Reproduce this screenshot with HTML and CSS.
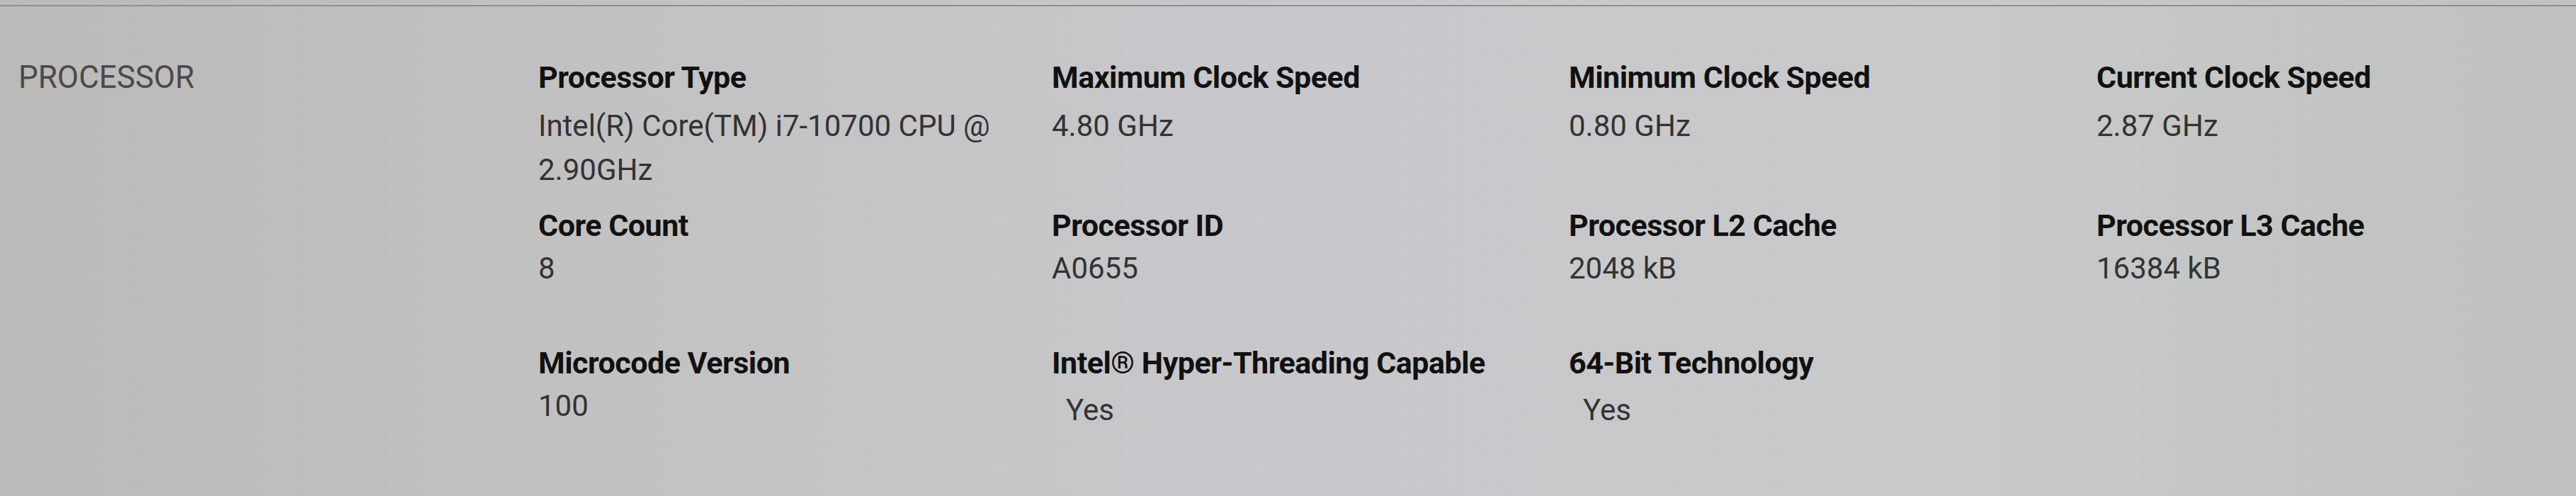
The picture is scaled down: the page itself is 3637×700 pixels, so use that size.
FILE: index.html
```html
<!DOCTYPE html>
<html lang="en">
<head>
  <meta charset="UTF-8" />
  <meta name="viewport" content="width=device-width, initial-scale=1.0"/>
  <title>Processor</title>
  <link rel="stylesheet" href="styles.css">
</head>
<body>

<section class="spec-section">
  <h2 class="section-title">PROCESSOR</h2>

  <div class="spec-grid">
    <div class="spec top">
      <h4>Processor Type</h4>
      <p>Intel(R) Core(TM) i7-10700 CPU @ 2.90GHz</p>
    </div>
    <div class="spec top">
      <h4>Maximum Clock Speed</h4>
      <p>4.80 GHz</p>
    </div>
    <div class="spec top">
      <h4>Minimum Clock Speed</h4>
      <p>0.80 GHz</p>
    </div>
    <div class="spec top">
      <h4>Current Clock Speed</h4>
      <p>2.87 GHz</p>
    </div>

    <div class="spec">
      <h4>Core Count</h4>
      <p>8</p>
    </div>
    <div class="spec">
      <h4>Processor ID</h4>
      <p>A0655</p>
    </div>
    <div class="spec">
      <h4>Processor L2 Cache</h4>
      <p>2048 kB</p>
    </div>
    <div class="spec">
      <h4>Processor L3 Cache</h4>
      <p>16384 kB</p>
    </div>

    <div class="spec">
      <h4>Microcode Version</h4>
      <p>100</p>
    </div>
    <div class="spec">
      <h4>Intel® Hyper-Threading Capable</h4>
      <p class="flag">Yes</p>
    </div>
    <div class="spec">
      <h4>64-Bit Technology</h4>
      <p class="flag">Yes</p>
    </div>
  </div>
</section>

</body>
</html>
```

FILE: styles.css
```css
body {
  margin: 0;
  height: 700px;
  font-family: 'Roboto', 'Liberation Sans', sans-serif;
  background: linear-gradient(to right, #bbbab8 0%, #c3c2c3 25%, #c8c7cb 50%, #c9c9cb 75%, #bfc2bf 100%);
  overflow: hidden;
}

.spec-section {
  margin-top: 7px;
  border-top: 2px solid #8f8f91;
  padding: 74px 0 0 26px;
  display: flex;
}

.section-title {
  width: 734px;
  margin: 0;
  font-size: 44px;
  line-height: 52px;
  font-weight: 400;
  color: #4a4a4c;
}

.spec-grid {
  display: grid;
  grid-template-columns: 725px 730px 745px 640px;
  grid-template-rows: 183px 168px auto;
  row-gap: 26px;
}

.spec h4 {
  margin: 0;
  font-size: 43px;
  line-height: 52px;
  font-weight: 700;
  color: #111;
  letter-spacing: -0.5px;
}

.spec p {
  margin: 4px 0 0;
  max-width: 680px;
  font-size: 42px;
  line-height: 62px;
  font-weight: 400;
  color: #333;
}

.spec.top p { margin-top: 12px; }

.spec p.flag { padding-left: 20px; margin-top: 10px; }
```
